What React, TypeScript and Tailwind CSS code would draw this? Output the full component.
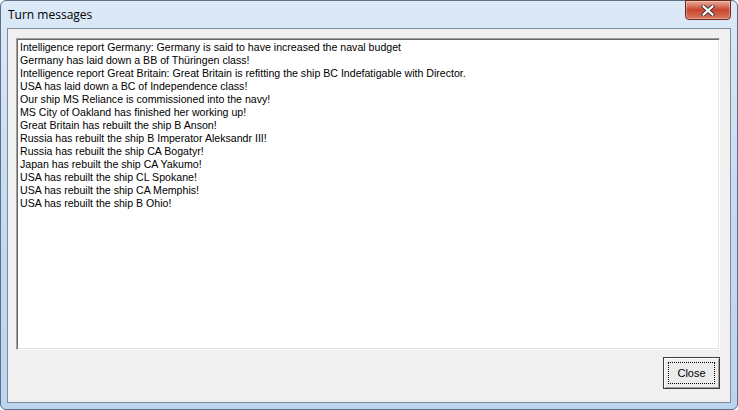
import React from "react";

const lines = [
  "Intelligence report Germany: Germany is said to have increased the naval budget",
  "Germany has laid down a BB of Thüringen class!",
  "Intelligence report Great Britain: Great Britain is refitting the ship BC Indefatigable with Director.",
  "USA has laid down a BC of Independence class!",
  "Our ship MS Reliance is commissioned into the navy!",
  "MS City of Oakland has finished her working up!",
  "Great Britain has rebuilt the ship B Anson!",
  "Russia has rebuilt the ship B Imperator Aleksandr III!",
  "Russia has rebuilt the ship CA Bogatyr!",
  "Japan has rebuilt the ship CA Yakumo!",
  "USA has rebuilt the ship CL Spokane!",
  "USA has rebuilt the ship CA Memphis!",
  "USA has rebuilt the ship B Ohio!",
];

function CloseGlyph() {
  return (
    <svg width="14" height="11" viewBox="0 0 14 11">
      <path d="M2.5 1.5 L11.5 9.5 M11.5 1.5 L2.5 9.5" stroke="#3b3b3b" strokeWidth="4" strokeLinecap="square" />
      <path d="M2.5 1.5 L11.5 9.5 M11.5 1.5 L2.5 9.5" stroke="#ffffff" strokeWidth="2.2" strokeLinecap="square" />
    </svg>
  );
}

export default function App() {
  return (
    <div className="w-[738px] h-[410px] bg-white">
      <div className="relative w-[738px] h-[410px] rounded-[6px] border border-[#5d6f86] bg-gradient-to-b from-[#dce9f7] via-[#c6dbf1] to-[#bcd4ee] flex flex-col font-['Liberation_Sans',Arial,sans-serif]">
        {/* title bar */}
        <div className="h-[27px] flex items-center pl-[7px] text-[12px] text-black font-['Open_Sans','Liberation_Sans',sans-serif]">
          Turn messages
        </div>
        <div className="absolute top-[-1px] right-[6px] w-[46px] h-[20px] rounded-b-[4px] border border-[#6d2318] bg-gradient-to-b from-[#e9a99a] via-[#c9452e] to-[#d8765f] shadow-[inset_0_0_0_1px_rgba(255,255,255,0.35)] flex items-center justify-center">
          <CloseGlyph />
        </div>

        {/* client area */}
        <div className="mx-[6px] mb-[6px] flex-1 border border-[#7d8c9e] bg-[#f0f0f0] flex flex-col pt-[9px] pl-[8px] pr-[10px]">
          <div className="h-[312px] border border-t-[#a0a0a0] border-l-[#a0a0a0] border-b-white border-r-white shadow-[inset_1px_1px_0_#696969,inset_-1px_-1px_0_#e3e3e3] bg-white pl-[3px] pt-[2px] overflow-hidden">
            {lines.map((l, i) => (
              <div key={i} className="text-[10.6px] leading-[13px] text-black whitespace-nowrap">
                {l}
              </div>
            ))}
          </div>
          <div className="flex justify-end mt-[7px]">
            <div className="w-[57px] h-[32px] border border-[#3c3c3c] bg-[#ececec] shadow-[inset_1px_1px_0_#ffffff,inset_-1px_-1px_0_#a0a0a0] p-[4px]">
              <div className="w-full h-full border border-dotted border-black flex items-center justify-center text-[11px] text-black">
                Close
              </div>
            </div>
          </div>
        </div>
      </div>
    </div>
  );
}
